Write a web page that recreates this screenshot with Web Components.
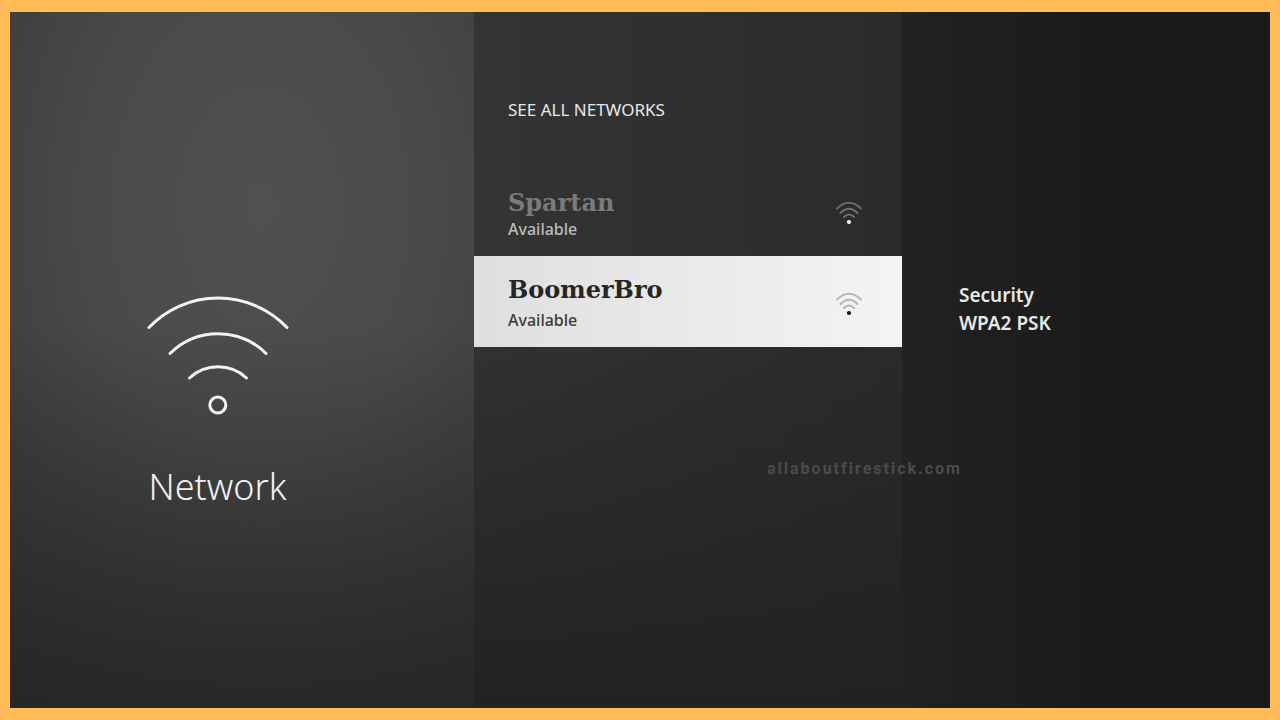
<!DOCTYPE html>
<html lang="en">
<head>
<meta charset="utf-8">
<meta name="viewport" content="width=device-width, initial-scale=1">
<title>Network</title>
<style>
  html, body { height: 100%; margin: 0; }
  body { font-family: "Noto Sans", "Open Sans", sans-serif; color: #e8e8e8; background: #ffbc57; }
</style>
</head>
<body>
<network-screen></network-screen>
<script>
  const define = (name, html, setup) => customElements.define(name, class extends HTMLElement {
    constructor() {
      super();
      this.attachShadow({ mode: "open" }).innerHTML = html;
    }
    connectedCallback() { if (setup) setup(this); }
  });

  define("wifi-emblem", `
    <style>
      :host { display: block; }
      svg { display: block; width: 144px; height: 122px; }
    </style>
    <svg viewBox="0 0 144 122" fill="none" stroke="#f2f2f2" stroke-width="3" stroke-linecap="round" aria-hidden="true">
      <path d="M3 34.500A95.500 95.500 0 0 1 141 34.500"/>
      <path d="M24 60.500A68 68 0 0 1 120 60.500"/>
      <path d="M43.500 85A42 42 0 0 1 100.500 85"/>
      <circle cx="71.800" cy="112" r="8"/>
    </svg>`);

  define("signal-icon", `
    <style>
      :host { display: block; flex: none; }
      svg { display: block; width: 28px; height: 24px; }
      .arcs { stroke: var(--arc, #6e6e6e); }
      circle { fill: var(--dot, #fff); }
    </style>
    <svg viewBox="0 0 28 24" fill="none" aria-hidden="true">
      <g class="arcs" stroke-width="1.900" stroke-linecap="round">
        <path d="M2 7.500Q14 -4 26 7.500"/>
        <path d="M5.500 12Q14 3.500 22.500 12"/>
        <path d="M9 16Q14 11 19 16"/>
      </g>
      <circle cx="14" cy="21" r="2.100"/>
    </svg>`);

  define("network-item", `
    <style>
      :host { display: block; --name: #7a7a7a; --status: #bcbcbc; }
      :host([selected]) { --name: #262626; --status: #3a3a3a; --arc: #b4b4b4; --dot: #111; }
      button {
        display: flex; align-items: center; justify-content: space-between;
        box-sizing: border-box; width: 100%; min-height: 91px; margin: 0; padding: 0 39px 0 34px;
        border: 0; background: none; font: inherit; text-align: left; cursor: pointer;
      }
      :host([selected]) button { background: linear-gradient(90deg, #dfdfdf, #f4f4f4); }
      .text { display: grid; gap: 0; padding-top: 4px; }
      :host([selected]) .text { gap: 4px; padding-top: 0; }
      .name { font: bold 24px/32px "DejaVu Serif", serif; color: var(--name); }
      .status { font-size: 16px; line-height: 20px; font-weight: 500; color: var(--status); }
      signal-icon { margin-top: 4px; }
    </style>
    <button type="button">
      <span class="text"><span class="name"><slot></slot></span><span class="status"><slot name="status"></slot></span></span>
      <signal-icon></signal-icon>
    </button>`,
    el => el.shadowRoot.querySelector("button").setAttribute("aria-pressed", el.hasAttribute("selected")));

  define("security-info", `
    <style>
      :host { display: block; font-size: 19px; line-height: 28px; font-weight: 600; }
      dl, dt, dd { margin: 0; }
    </style>
    <dl><dt><slot name="label"></slot></dt><dd><slot></slot></dd></dl>`);

  define("network-screen", `
    <style>
      :host {
        display: grid; grid-template-columns: 464fr 428fr 368fr; position: relative;
        box-sizing: border-box; min-height: 100vh; border: 12px solid #ffbc57; border-inline-width: 10px;
      }
      .hero {
        display: flex; flex-direction: column; align-items: center; padding: 281px 49px 0 0;
        background: linear-gradient(180deg, #22222200 45%, #222222c0), radial-gradient(ellipse 420px 620px at 54% 28%, #505050, #4a4a4a 40%, #333);
      }
      h1 { margin: 44px 0 0; font-size: 36px; line-height: 56px; font-weight: 300; color: #f2f2f2; }
      .list { padding-top: 85px; background: linear-gradient(180deg, #22222200 40%, #222), linear-gradient(90deg, #343434, #2b2b2b); }
      h2 { margin: 0 0 42px; padding-left: 34px; font-size: 17px; line-height: 26px; font-weight: 400; }
      .details { padding: 269px 0 0 57px; background: linear-gradient(90deg, #222, #1b1b1b 50%); }
      .mark {
        position: absolute; left: 757px; top: 447px; color: #4b4b4b;
        font: 700 16px/20px Roboto, sans-serif; letter-spacing: 2px;
      }
    </style>
    <section class="hero"><wifi-emblem></wifi-emblem><h1>Network</h1></section>
    <section class="list">
      <h2>SEE ALL NETWORKS</h2>
      <network-item>Spartan<span slot="status">Available</span></network-item>
      <network-item selected>BoomerBro<span slot="status">Available</span></network-item>
    </section>
    <aside class="details"><security-info><span slot="label">Security</span>WPA2 PSK</security-info></aside>
    <div class="mark">allaboutfirestick.com</div>`);
</script>
</body>
</html>
